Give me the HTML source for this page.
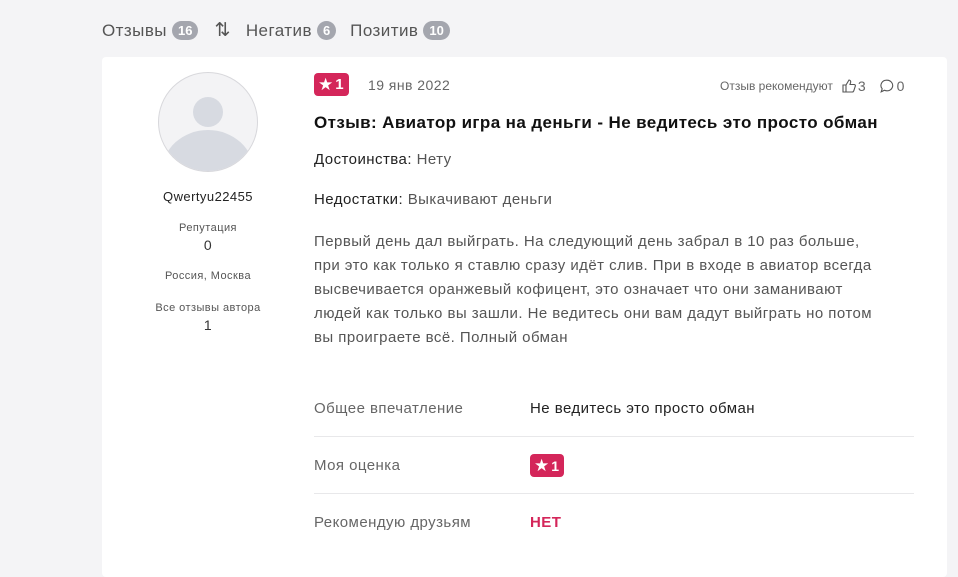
<!DOCTYPE html>
<html><head><meta charset="utf-8"><style>
*{margin:0;padding:0;box-sizing:border-box}
body{width:958px;height:558px;overflow:hidden;background:#f4f4f6;font-family:"Liberation Sans","DejaVu Sans",sans-serif;color:#222;position:relative;letter-spacing:.45px}
.tabs{position:absolute;top:19px;left:102px;font-size:17px;color:#555;display:flex;align-items:center}
.cnt{display:inline-block;background:#a4a6ae;color:#fff;font-size:13px;font-weight:bold;border-radius:10px;padding:2px 6px;margin-left:5px;line-height:15px;letter-spacing:0}
.card{position:absolute;left:102px;top:57px;width:845px;height:520px;background:#fff;border-radius:4px}
.ab{position:absolute;text-align:center;width:200px;left:108px;color:#555;font-size:11px}
.badge{display:inline-flex;align-items:center;background:#d4265a;color:#fff;font-weight:bold;font-size:15px;border-radius:4px;height:23px;padding:0 5px 0 4px;letter-spacing:0}
.badge i{font-style:normal;font-size:17px;margin-right:2px}
.t{position:absolute;left:314px}
.p{font-size:15px;color:#555;line-height:24px}
.row{position:absolute;left:314px;width:600px;height:57px;border-bottom:1px solid #e8e8ea;font-size:15px;color:#666}
.row span{position:absolute;left:0;top:0}
.row b{position:absolute;left:216px;top:0;font-weight:normal;color:#222}
</style></head><body>
<div class="tabs"><span>Отзывы</span><span class="cnt">16</span><span style="margin-left:16px;font-size:19px;color:#555">⇅</span><span style="margin-left:15px">Негатив</span><span class="cnt">6</span><span style="margin-left:14px">Позитив</span><span class="cnt">10</span></div>
<div class="card"></div>
<svg style="position:absolute;left:158px;top:72px" width="100" height="100"><defs><clipPath id="c"><circle cx="50" cy="50" r="49"/></clipPath></defs><circle cx="50" cy="50" r="49.5" fill="#f3f3f5" stroke="#d8d8dc"/><g clip-path="url(#c)"><circle cx="50" cy="40" r="15" fill="#d7dae1"/><ellipse cx="50" cy="100" rx="46" ry="42" fill="#d7dae1"/></g></svg>
<div class="ab" style="top:189px;font-size:13px;color:#222">Qwertyu22455</div>
<div class="ab" style="top:222px">Репутация</div>
<div class="ab" style="top:237px;font-size:14px;color:#333">0</div>
<div class="ab" style="top:270px">Россия, Москва</div>
<div class="ab" style="top:302px">Все отзывы автора</div>
<div class="ab" style="top:317px;font-size:14px;color:#333">1</div>
<div class="t" style="top:73px"><span class="badge"><i>★</i>1</span></div>
<div class="t" style="left:368px;top:77px;font-size:14px;color:#666">19 янв 2022</div>
<div class="t" style="left:720px;top:78px;font-size:12px;color:#666;letter-spacing:0;display:flex;align-items:center">Отзыв рекомендуют
<svg style="margin-left:9px" width="14" height="14" viewBox="0 0 14 14" fill="none" stroke="#555" stroke-width="1.1"><path d="M1 6h3v7H1zM4 6l3-5c1 0 2 1 1.6 2.5L8 5.5h4c1 0 1.6.8 1.3 1.7l-1.6 4.8c-.3.7-.8 1-1.5 1H4"/></svg><span style="font-size:14px;margin-left:2px">3</span>
<svg style="margin-left:14px" width="14" height="14" viewBox="0 0 14 14" fill="none" stroke="#555" stroke-width="1.1"><path d="M7 1.2a5.6 5.3 0 1 1-2.5 10L1.2 12.8l1-3A5.6 5.3 0 0 1 7 1.2z"/></svg><span style="font-size:14px;margin-left:3px">0</span></div>
<div class="t" style="top:113px;font-size:17px;font-weight:bold;color:#111;letter-spacing:.4px">Отзыв: Авиатор игра на деньги - Не ведитесь это просто обман</div>
<div class="t p" style="top:148px"><span style="color:#222">Достоинства:</span> Нету</div>
<div class="t p" style="top:188px"><span style="color:#222">Недостатки:</span> Выкачивают деньги</div>
<div class="t p" style="top:230px;width:570px">Первый день дал выйграть. На следующий день забрал в 10 раз больше, при это как только я ставлю сразу идёт слив. При в входе в авиатор всегда высвечивается оранжевый кофицент, это означает что они заманивают людей как только вы зашли. Не ведитесь они вам дадут выйграть но потом вы проиграете всё. Полный обман</div>
<div class="row" style="top:400px;height:37px"><span>Общее впечатление</span><b>Не ведитесь это просто обман</b></div>
<div class="row" style="top:437px"><span style="top:20px">Моя оценка</span><b style="top:17px"><span class="badge" style="position:static;height:23px;font-size:14px"><i>★</i>1</span></b></div>
<div class="row" style="top:494px;border:none"><span style="top:20px">Рекомендую друзьям</span><b style="top:20px;color:#d4265a;font-weight:bold">НЕТ</b></div>
</body></html>
